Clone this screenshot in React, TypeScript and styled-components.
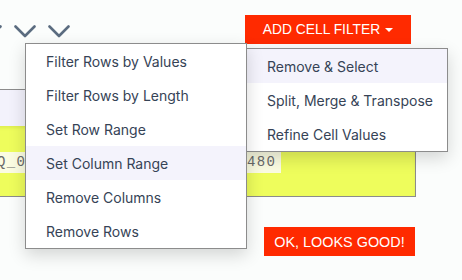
import styled, { createGlobalStyle } from "styled-components";

const GlobalStyle = createGlobalStyle`
  body {
    margin: 0;
    background: #fbfdfc;
    overflow: hidden;
  }
`;

const Page = styled.div`
  position: relative;
  width: 462px;
  height: 280px;
  overflow: hidden;
  font-family: Inter, "Noto Sans", sans-serif;
`;

const TopBar = styled.div`
  display: flex;
  justify-content: space-between;
  align-items: flex-start;
  padding: 15px 51px 0 0;
`;

const ChevronGroup = styled.div`
  display: flex;
  gap: 12px;
  margin: 10px 0 0 -20px;
`;

const ButtonWrap = styled.div`
  position: relative;
`;

const RedButton = styled.button<{ $w: number; $size: number }>`
  display: flex;
  align-items: center;
  justify-content: center;
  gap: 5px;
  width: ${(p) => p.$w}px;
  height: 29px;
  padding: 0;
  border: none;
  background: #ff2a00;
  color: #fff;
  font-family: "Liberation Sans", Arial, sans-serif;
  font-size: ${(p) => p.$size}px;
  text-transform: uppercase;
  cursor: pointer;
`;

const Caret = styled.span`
  width: 0;
  height: 0;
  border-left: 4px solid transparent;
  border-right: 4px solid transparent;
  border-top: 4px solid #fff;
  margin-top: 1px;
`;

const Menu = styled.ul<{ $top: number; $left: number; $w: number }>`
  position: absolute;
  top: ${(p) => p.$top}px;
  left: ${(p) => p.$left}px;
  width: ${(p) => p.$w}px;
  margin: 0;
  padding: 0;
  list-style: none;
  background: #fff;
  border: 1px solid #8c8c8c;
  box-shadow: 0 6px 16px rgba(0, 0, 0, 0.16);
  z-index: 2;
`;

const MenuItem = styled.li<{ $active?: boolean }>`
  height: 34px;
  display: flex;
  align-items: center;
  padding-left: 20px;
  font-size: 14px;
  color: #364356;
  white-space: nowrap;
  background: ${(p) => (p.$active ? "#f4f3fc" : "transparent")};
`;

const Table = styled.div`
  margin: 45px 0 0 -10px;
  width: 424px;
  border: 1px solid #8c8c8c;
`;

const HeaderBar = styled.div`
  height: 36px;
  background: #f3f2fc;
`;

const CellRow = styled.div`
  height: 70px;
  display: grid;
  grid-template-columns: 256px 1fr;
  align-items: center;
  background: #eefd5c;
  box-shadow: inset 0 2px 3px rgba(120, 130, 0, 0.12);
`;

const Cell = styled.div<{ $pad: number }>`
  padding-left: ${(p) => p.$pad}px;
`;

const CellText = styled.span`
  display: inline-block;
  line-height: 21px;
  padding-right: 5px;
  font-family: "Liberation Mono", "Courier New", monospace;
  font-size: 14px;
  letter-spacing: 1.4px;
  color: #6a6a6a;
  background: #fbfce2;
`;

const Footer = styled.div`
  display: flex;
  justify-content: flex-end;
  padding-right: 47px;
  margin-top: 30px;
`;

function Chevron() {
  return (
    <svg width="22" height="13" viewBox="0 0 22 13" fill="none">
      <path
        d="M1.5 1.5 L11 11 L20.5 1.5"
        stroke="#5b6c80"
        strokeWidth="2.6"
        strokeLinecap="round"
        strokeLinejoin="round"
      />
    </svg>
  );
}

const leftItems = [
  "Filter Rows by Values",
  "Filter Rows by Length",
  "Set Row Range",
  "Set Column Range",
  "Remove Columns",
  "Remove Rows",
];

const rightItems = ["Remove & Select", "Split, Merge & Transpose", "Refine Cell Values"];

export default function App() {
  return (
    <Page>
      <GlobalStyle />
      <TopBar>
        <ChevronGroup>
          <Chevron />
          <Chevron />
          <Chevron />
        </ChevronGroup>
        <ButtonWrap>
          <RedButton $w={166} $size={13.8}>
            Add Cell Filter
            <Caret />
          </RedButton>
          <Menu $top={33} $left={1} $w={200}>
            {rightItems.map((t, i) => (
              <MenuItem key={t} $active={i === 0}>
                {t}
              </MenuItem>
            ))}
          </Menu>
        </ButtonWrap>
      </TopBar>

      <Table>
        <HeaderBar />
        <CellRow>
          <Cell $pad={6}>
            <CellText>Q_0</CellText>
          </Cell>
          <Cell $pad={0}>
            <CellText>480</CellText>
          </Cell>
        </CellRow>
      </Table>

      <Footer>
        <RedButton $w={151} $size={14.4}>
          OK, Looks Good!
        </RedButton>
      </Footer>

      <Menu $top={43} $left={25} $w={220}>
        {leftItems.map((t, i) => (
          <MenuItem key={t} $active={i === 3}>
            {t}
          </MenuItem>
        ))}
      </Menu>
    </Page>
  );
}
